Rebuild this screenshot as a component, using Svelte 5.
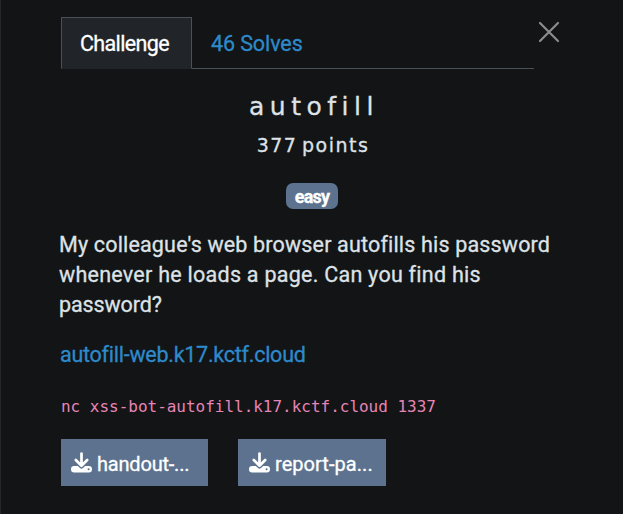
<script>
  const files = [
    { name: 'handout-...', spacing: -0.2 },
    { name: 'report-pa...', spacing: 0.05 }
  ];
</script>

<div class="modal">
  <header>
    <nav>
      <button class="tab active"><span>Challenge</span></button>
      <button class="tab"><span>46 Solves</span></button>
    </nav>
    <button class="close" aria-label="Close">
      <svg width="22" height="22" viewBox="0 0 22 22"><path d="M2 2 20 20M20 2 2 20" /></svg>
    </button>
  </header>
  <h2><span>autofill</span></h2>
  <h3><span>377 points</span></h3>
  <div class="tags"><b><span>easy</span></b></div>
  <p class="description">
    <span class="l1">My colleague's web browser autofills his password</span><br />
    <span class="l2">whenever he loads a page. Can you find his</span><br />
    <span class="l3">password?</span>
  </p>
  <p class="link"><span>autofill-web.k17.kctf.cloud</span></p>
  <code>nc xss-bot-autofill.k17.kctf.cloud 1337</code>
  <div class="files">
    {#each files as file}
      <button class="file">
        <svg width="21" height="21" viewBox="0 0 21 21">
          <path class="arrow" d="M10.5 1.5V13M4.8 8l5.7 5.7L16.2 8" />
          <path class="tray" fill-rule="evenodd" d="M3.2 14H6.8l2.2 2.1q1.5 1.3 3 0L14.2 14h3.6a3.2 3.2 0 0 1 0 6.4H3.2a3.2 3.2 0 0 1 0-6.4ZM17.6 16.3a1 1 0 1 0 0 2 1 1 0 0 0 0-2Z" />
        </svg>
        <span style="letter-spacing: {file.spacing}px">{file.name}</span>
      </button>
    {/each}
  </div>
</div>

<style>
  :global(body) { background: #121416; }
  .modal {
    box-sizing: border-box;
    width: 623px;
    height: 514px;
    padding: 17px 60px 0;
    border-left: 1px solid #25282b;
    background: #121416;
    color: #dee2e6;
    font-family: Roboto, "Liberation Sans", sans-serif;
    font-size: 21.5px;
    line-height: 30px;
    -webkit-text-stroke: 0.3px currentColor;
    overflow: hidden;
    white-space: nowrap;
  }
  button { border: 0; padding: 0; margin: 0; background: none; font: inherit; color: inherit; }
  header { display: flex; height: 52px; }
  nav { box-sizing: border-box; width: 473px; display: flex; border-bottom: 1px solid #495057; }
  .tab { box-sizing: border-box; height: 52px; padding: 2px 18px 0; border: 1px solid transparent; color: #2e8acb; letter-spacing: -0.1px; }
  .active { width: 131px; padding: 2px 0 0 18px; text-align: left; border-color: #495057; border-bottom-color: #212529; background: #212529; color: #fff; letter-spacing: -0.65px; }
  .close { width: 22px; height: 22px; margin: 4px 0 0 4px; }
  .close svg { display: block; fill: none; stroke: #8b8c8d; stroke-width: 2.2; stroke-linecap: round; }
  h2, h3 { margin: 0; font-family: "DejaVu Sans", sans-serif; font-weight: 400; text-align: center; }
  h2 { height: 37px; margin-top: 20px; padding-left: 4px; font-size: 25px; line-height: 36px; letter-spacing: 5.5px; }
  h3 { height: 30px; margin-top: 4px; padding-left: 2px; font-size: 19px; letter-spacing: 1.5px; word-spacing: -3px; }
  .tags { display: flex; justify-content: center; margin-top: 23px; }
  b { width: 52px; height: 26px; border-radius: 7px; background: #5c728f; color: #fff; font-size: 18px; line-height: 27px; font-weight: 700; letter-spacing: -0.8px; text-align: center; }
  p { margin: 0; }
  .description { margin: 21px 0 0 -2px; }
  .l1 { letter-spacing: 0.17px; }
  .l2 { letter-spacing: 0.26px; }
  .l3 { letter-spacing: -0.1px; }
  .link { margin: 20px 0 0 -1px; color: #2e8acb; letter-spacing: -0.26px; }
  code { display: block; height: 30px; margin: 22px 0 0; color: #e685b5; font: 16px/30px "DejaVu Sans Mono", monospace; letter-spacing: -0.02px; -webkit-text-stroke: 0; }
  .files { display: flex; gap: 30px; margin-top: 17px; }
  .file { width: 147px; height: 47px; padding-left: 10px; display: flex; align-items: center; background: #5c728f; color: #fff; font-size: 20px; }
  .file + .file { width: 148px; padding-left: 11px; }
  .file svg { flex: none; margin-right: 5px; }
  .file span { padding-top: 3px; }
  .arrow { fill: none; stroke: #fff; stroke-width: 2.7; stroke-linecap: round; stroke-linejoin: round; }
  .tray { fill: #fff; }
</style>
